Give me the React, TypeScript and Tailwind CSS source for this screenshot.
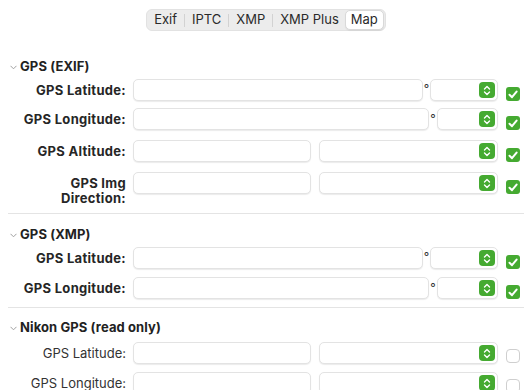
import React from 'react';

type Kind = 'lat' | 'lon' | 'split';

function Stepper() {
  return (
    <span className="flex h-[16px] w-[16px] items-center justify-center rounded-[4px] bg-[#45aa31]">
      <svg width="8" height="11" viewBox="0 0 8 11" fill="none">
        <path d="M1.5 4 L4 1.5 L6.5 4" stroke="white" strokeWidth="1.4" strokeLinecap="round" strokeLinejoin="round" />
        <path d="M1.5 7 L4 9.5 L6.5 7" stroke="white" strokeWidth="1.4" strokeLinecap="round" strokeLinejoin="round" />
      </svg>
    </span>
  );
}

function Input({ className }: { className: string }) {
  return (
    <div
      className={`h-[22px] shrink-0 rounded-[5px] border border-[#e3e3e3] bg-white shadow-[0_1px_1px_rgba(0,0,0,0.08)] ${className}`}
    />
  );
}

function Popup({ className }: { className: string }) {
  return (
    <div
      className={`flex h-[22px] shrink-0 items-center justify-end rounded-[5px] border border-[#e3e3e3] bg-white pr-[2px] shadow-[0_1px_1px_rgba(0,0,0,0.08)] ${className}`}
    >
      <Stepper />
    </div>
  );
}

function Check({ on }: { on: boolean }) {
  if (!on) {
    return (
      <span className="ml-[8px] mt-[7px] block h-[14px] w-[14px] shrink-0 self-start rounded-[4px] border border-[#cfcfcf] bg-white" />
    );
  }
  return (
    <span className="ml-[8px] mt-[8px] flex h-[14px] w-[14px] shrink-0 items-center justify-center self-start rounded-[3px] bg-[#45aa31]">
      <svg width="10" height="9" viewBox="0 0 10 9" fill="none">
        <path d="M1.5 4.8 L4 7.2 L8.6 1.6" stroke="white" strokeWidth="2" strokeLinecap="round" strokeLinejoin="round" />
      </svg>
    </span>
  );
}

function Row({
  label,
  kind,
  bold = true,
  on = true,
  className = '',
}: {
  label: React.ReactNode;
  kind: Kind;
  bold?: boolean;
  on?: boolean;
  className?: string;
}) {
  return (
    <div className={`flex items-start ${className}`}>
      <div
        className={`w-[126px] shrink-0 text-right text-[13px] ${
          bold ? 'font-bold tracking-[0.3px] text-[#262626]' : 'font-normal text-[#333333]'
        } ${typeof label === 'string' ? 'leading-[22px]' : 'mt-[4px] leading-[15px]'}`}
      >
        {label}
      </div>
      <div className="ml-[7px] flex items-start">
        {kind === 'lat' && (
          <>
            <Input className="w-[290px]" />
            <span className="w-[7px] text-center text-[12px] leading-[20px] text-[#333]">°</span>
            <Popup className="w-[68px]" />
          </>
        )}
        {kind === 'lon' && (
          <>
            <Input className="w-[296px]" />
            <span className="w-[8px] text-center text-[12px] leading-[22px] text-[#333]">°</span>
            <Popup className="w-[61px]" />
          </>
        )}
        {kind === 'split' && (
          <>
            <Input className="w-[178px]" />
            <Popup className="ml-[8px] w-[179px]" />
          </>
        )}
        <Check on={on} />
      </div>
    </div>
  );
}

function Header({ title, className = '' }: { title: string; className?: string }) {
  return (
    <div className={`flex h-[16px] items-center pl-[10px] ${className}`}>
      <svg width="7" height="5" viewBox="0 0 7 5" fill="none" className="mt-[1px]">
        <path d="M0.5 0.8 L3.5 3.8 L6.5 0.8" stroke="#a0a0a0" strokeWidth="1" />
      </svg>
      <span className="ml-[3px] text-[13px] font-bold tracking-[0.1px] text-[#222222]">{title}</span>
    </div>
  );
}

const tabs = ['Exif', 'IPTC', 'XMP', 'XMP Plus'];

export default function App() {
  return (
    <div className="h-[390px] w-[532px] overflow-hidden bg-white font-['Inter','Noto_Sans',sans-serif] antialiased">
      <div className="flex justify-center pt-[9px]">
        <div className="flex h-[22px] items-center rounded-[6px] border border-[#e2e2e2] bg-[#ececec] pl-[7px] pr-[1px] text-[13px] text-[#2a2a2a]">
          {tabs.map((t, i) => (
            <React.Fragment key={t}>
              {i > 0 && <span className="mx-[7px] h-[13px] w-px bg-[#d2d2d2]" />}
              <span>{t}</span>
            </React.Fragment>
          ))}
          <span className="ml-[6px] flex h-[20px] items-center rounded-[5px] border border-[#d9d9d9] bg-white px-[5px] shadow-[0_1px_1px_rgba(0,0,0,0.06)]">
            Map
          </span>
        </div>
      </div>

      <Header title="GPS (EXIF)" className="mt-[28px]" />
      <Row label="GPS Latitude:" kind="lat" className="mt-[4px]" />
      <Row label="GPS Longitude:" kind="lon" className="mt-[7px]" />
      <Row label="GPS Altitude:" kind="split" className="mt-[10px]" />
      <Row
        label={
          <>
            GPS Img
            <br />
            Direction:
          </>
        }
        kind="split"
        className="mt-[10px]"
      />
      <div className="ml-[8px] mr-[8px] mt-[7px] border-t border-[#e4e4e4]" />

      <Header title="GPS (XMP)" className="mt-[13px]" />
      <Row label="GPS Latitude:" kind="lat" className="mt-[4px]" />
      <Row label="GPS Longitude:" kind="lon" className="mt-[8px]" />
      <div className="ml-[8px] mr-[8px] mt-[8px] border-t border-[#e4e4e4]" />

      <Header title="Nikon GPS (read only)" className="mt-[12px]" />
      <Row label="GPS Latitude:" kind="split" bold={false} on={false} className="mt-[6px]" />
      <Row label="GPS Longitude:" kind="split" bold={false} on={false} className="mt-[8px]" />
    </div>
  );
}
